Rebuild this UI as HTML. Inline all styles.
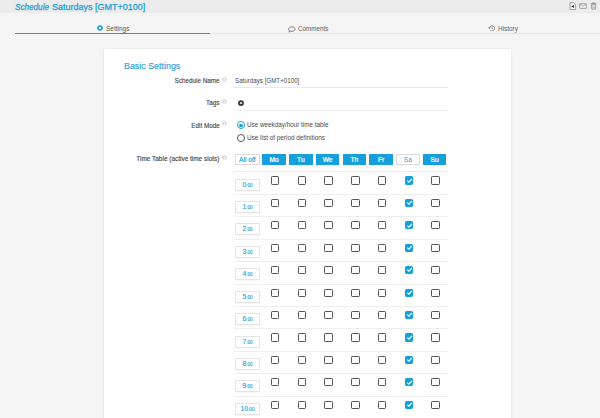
<!DOCTYPE html><html><head><meta charset="utf-8"><style>
*{margin:0;padding:0;box-sizing:border-box}
html,body{width:600px;height:418px;overflow:hidden;background:#f5f5f5;font-family:"Liberation Sans",sans-serif}
.a{position:absolute;white-space:nowrap}
.t{position:absolute;white-space:nowrap;transform-origin:0 0}
.tr{transform-origin:100% 0}
.line{height:1px;background:#e8e8e8}
.btn{height:11px;background:#179fdb;color:#fff;font-size:6.6px;font-weight:bold;text-align:center}
.wbtn{background:#fff;border:0.8px solid #dcdcdc;color:#179fdb;font-weight:normal}
.cb{width:8.3px;height:8.2px;border:1.25px solid #575757;border-radius:1.2px}
.cbc{background:#179fdb;border-color:#179fdb}
.tbtn{height:12px;width:24.6px;background:#fff;border:0.8px solid #e4e4e4;border-radius:1px;box-shadow:0 0.4px 0.6px rgba(0,0,0,0.06);color:#179fdb;text-align:center;line-height:9.8px;font-size:6.8px;-webkit-text-stroke:0.12px #179fdb}
.tbtn small{font-size:4.6px}
.radio{width:8px;height:8px;border:1px solid #555;border-radius:50%}
</style></head><body><div class="a" style="left:0;top:0;width:600px;height:13.4px;background:#ececec"></div><div class="t" style="left:15.00px;top:3.30px;font-size:9.0px;line-height:9.0px;color:#179fdb;transform:scaleX(0.9060);font-style:italic;-webkit-text-stroke:0.25px #179fdb">Schedule</div><div class="t" style="left:52.00px;top:3.30px;font-size:9.0px;line-height:9.0px;color:#179fdb;transform:scaleX(1.0000);-webkit-text-stroke:0.25px #179fdb">Saturdays [GMT+0100]</div><svg class="a" style="left:569px;top:2px" width="29" height="9" viewBox="0 0 29 9">
<path d="M1.1 0.7h3.7l1.8 1.8v5h-5.5z" fill="#f6f6f6" stroke="#8a8a8a" stroke-width="0.8"/>
<path d="M5 2.7l-2.6 1.7 2.6 1.7z" fill="#3a3a3a"/>
<rect x="10.7" y="1.7" width="6.6" height="4.7" rx="0.5" fill="#f6f6f6" stroke="#8a8a8a" stroke-width="0.8"/>
<path d="M10.9 2.1l3.1 2.3 3.1-2.3" fill="none" stroke="#8a8a8a" stroke-width="0.8"/>
<path d="M21.8 1.6h5.4M23.5 1.6v-0.8h2v0.8M22.4 2.4h4.4l-0.4 4.7h-3.6z" fill="none" stroke="#8f8f8f" stroke-width="0.8"/>
<path d="M22.9 4h3.4M23 5.5h3.2" stroke="#aaa" stroke-width="0.6"/>
</svg><div class="a" style="left:15px;top:33px;width:585px;height:1px;background:#e6e6e6"></div><div class="a" style="left:15px;top:32.6px;width:195px;height:1.4px;background:#179fdb"></div><svg class="a" style="left:97.3px;top:25.2px" width="6" height="6" viewBox="0 0 6 6"><circle cx="3" cy="3" r="2.0" fill="none" stroke="#179fdb" stroke-width="1.6"/><path d="M3 0.4v1M3 4.6v1M0.4 3h1M4.6 3h1M1.2 1.2l0.7 0.7M4.1 4.1l0.7 0.7M1.2 4.8l0.7-0.7M4.1 1.9l0.7-0.7" stroke="#179fdb" stroke-width="0.8"/></svg><div class="t" style="left:105.50px;top:25.70px;font-size:6.4px;line-height:6.4px;color:#5a5a5a;transform:scaleX(1.0162);">Settings</div><svg class="a" style="left:287.6px;top:25.6px" width="8" height="7" viewBox="0 0 8 7"><path d="M4 0.9c1.8 0 3.1 1 3.1 2.2s-1.3 2.2-3.1 2.2c-0.5 0-0.9-0.1-1.3-0.2l-1.7 1.1 0.5-1.5c-0.6-0.4-0.9-1-0.9-1.6 0-1.2 1.4-2.2 3.4-2.2z" fill="none" stroke="#6a6a6a" stroke-width="0.85"/></svg><div class="t" style="left:298.00px;top:25.60px;font-size:6.4px;line-height:6.4px;color:#5a5a5a;transform:scaleX(0.9793);">Comments</div><svg class="a" style="left:487.9px;top:24.7px" width="7" height="6.5" viewBox="0 0 7 6.5"><path d="M1.4 3.2a2.6 2.6 0 1 1 1 2.2" fill="none" stroke="#666" stroke-width="0.8"/><path d="M0.2 2.6l1.2 1.3 1.2-1.3z" fill="#666"/><path d="M4 1.8v1.6h1.1" fill="none" stroke="#666" stroke-width="0.6"/></svg><div class="t" style="left:497.90px;top:25.50px;font-size:6.4px;line-height:6.4px;color:#5a5a5a;transform:scaleX(1.0044);">History</div><div class="a" style="left:103.8px;top:49.4px;width:407px;height:400px;background:#fff;box-shadow:0 0 2px rgba(0,0,0,0.12)"></div><div class="t" style="left:124.00px;top:60.80px;font-size:9.6px;line-height:9.6px;color:#2a9fd8;transform:scaleX(0.9255);-webkit-text-stroke:0.15px #2a9fd8">Basic Settings</div><div class="t tr" style="right:380.20px;top:77.60px;font-size:6.4px;line-height:6.4px;color:#444;transform:scaleX(0.9838);-webkit-text-stroke:0.12px #444">Schedule Name</div><svg class="a" style="left:222.00px;top:76.65px" width="5" height="5" viewBox="0 0 5 5"><circle cx="2.5" cy="2.5" r="2.35" fill="#dadada"/><rect x="2.1" y="2.0" width="0.8" height="1.9" fill="#fff"/><rect x="2.1" y="1.0" width="0.8" height="0.7" fill="#fff"/></svg><div class="t" style="left:235.30px;top:77.90px;font-size:6.5px;line-height:6.5px;color:#4a4a4a;transform:scaleX(0.9543);">Saturdays [GMT+0100]</div><div class="a line" style="left:233.5px;top:86.7px;width:214.3px"></div><div class="t tr" style="right:380.20px;top:99.80px;font-size:6.4px;line-height:6.4px;color:#444;transform:scaleX(0.9912);-webkit-text-stroke:0.12px #444">Tags</div><svg class="a" style="left:222.00px;top:98.55px" width="5" height="5" viewBox="0 0 5 5"><circle cx="2.5" cy="2.5" r="2.35" fill="#dadada"/><rect x="2.1" y="2.0" width="0.8" height="1.9" fill="#fff"/><rect x="2.1" y="1.0" width="0.8" height="0.7" fill="#fff"/></svg><svg class="a" style="left:237.8px;top:99.9px" width="6" height="6" viewBox="0 0 6 6"><circle cx="3" cy="3" r="2.1" fill="#fff" stroke="#222" stroke-width="1.5"/><path d="M3 2.2v1.6M2.2 3h1.6" stroke="#777" stroke-width="0.5"/></svg><div class="a line" style="left:233.5px;top:109.9px;width:214.3px;background:#eeeeee"></div><div class="t tr" style="right:380.20px;top:122.60px;font-size:6.4px;line-height:6.4px;color:#444;transform:scaleX(0.9925);-webkit-text-stroke:0.12px #444">Edit Mode</div><svg class="a" style="left:222.00px;top:121.05px" width="5" height="5" viewBox="0 0 5 5"><circle cx="2.5" cy="2.5" r="2.35" fill="#dadada"/><rect x="2.1" y="2.0" width="0.8" height="1.9" fill="#fff"/><rect x="2.1" y="1.0" width="0.8" height="0.7" fill="#fff"/></svg><div class="a radio" style="left:237.2px;top:121.3px;border-color:#179fdb"></div><div class="a" style="left:239.4px;top:123.5px;width:3.6px;height:3.6px;border-radius:50%;background:#179fdb"></div><div class="t" style="left:247.20px;top:121.90px;font-size:6.4px;line-height:6.4px;color:#4a4a4a;transform:scaleX(0.9887);">Use weekday/hour time table</div><div class="a radio" style="left:237.2px;top:133.8px"></div><div class="t" style="left:247.20px;top:134.60px;font-size:6.4px;line-height:6.4px;color:#4a4a4a;transform:scaleX(0.9979);">Use list of period definitions</div><div class="t tr" style="right:380.50px;top:156.40px;font-size:6.4px;line-height:6.4px;color:#444;transform:scaleX(1.0083);-webkit-text-stroke:0.12px #444">Time Table (active time slots)</div><svg class="a" style="left:222.00px;top:154.95px" width="5" height="5" viewBox="0 0 5 5"><circle cx="2.5" cy="2.5" r="2.35" fill="#dadada"/><rect x="2.1" y="2.0" width="0.8" height="1.9" fill="#fff"/><rect x="2.1" y="1.0" width="0.8" height="0.7" fill="#fff"/></svg><div class="a btn wbtn" style="left:235.3px;top:154.2px;width:24.4px;height:11px;"></div><div class="t" style="left:239.20px;top:157.10px;font-size:6.8px;line-height:6.8px;color:#179fdb;transform:scaleX(0.9832);-webkit-text-stroke:0.15px #179fdb">All off</div><div class="a btn" style="left:262.30px;top:154.2px;width:23.6px;height:10.8px"></div><div class="t" style="left:269.52px;top:156.90px;font-size:6.6px;line-height:6.6px;color:#fff;transform:scaleX(1.0000);-webkit-text-stroke:0.22px #fff">Mo</div><div class="a btn" style="left:289.05px;top:154.2px;width:23.6px;height:10.8px"></div><div class="t" style="left:297.12px;top:156.90px;font-size:6.6px;line-height:6.6px;color:#fff;transform:scaleX(1.0000);-webkit-text-stroke:0.22px #fff">Tu</div><div class="a btn" style="left:315.80px;top:154.2px;width:23.6px;height:10.8px"></div><div class="t" style="left:322.71px;top:156.90px;font-size:6.6px;line-height:6.6px;color:#fff;transform:scaleX(1.0000);-webkit-text-stroke:0.22px #fff">We</div><div class="a btn" style="left:342.55px;top:154.2px;width:23.6px;height:10.8px"></div><div class="t" style="left:350.50px;top:156.90px;font-size:6.6px;line-height:6.6px;color:#fff;transform:scaleX(1.0000);-webkit-text-stroke:0.22px #fff">Th</div><div class="a btn" style="left:369.30px;top:154.2px;width:23.6px;height:10.8px"></div><div class="t" style="left:377.99px;top:156.90px;font-size:6.6px;line-height:6.6px;color:#fff;transform:scaleX(1.0000);-webkit-text-stroke:0.22px #fff">Fr</div><div class="a btn wbtn" style="left:396.05px;top:154.2px;width:23.6px;height:10.8px"></div><div class="t" style="left:403.81px;top:156.90px;font-size:6.6px;line-height:6.6px;color:#179fdb;transform:scaleX(1.0000);">Sa</div><div class="a btn" style="left:422.80px;top:154.2px;width:23.6px;height:10.8px"></div><div class="t" style="left:430.56px;top:156.90px;font-size:6.6px;line-height:6.6px;color:#fff;transform:scaleX(1.0000);-webkit-text-stroke:0.22px #fff">Su</div><div class="a line" style="left:234.2px;top:171.4px;width:213.6px;background:#ececec"></div><div class="a tbtn" style="left:235.2px;top:178.60px">0<small>:00</small></div><div class="a cb" style="left:271.05px;top:176.40px"></div><div class="a cb" style="left:297.77px;top:176.40px"></div><div class="a cb" style="left:324.49px;top:176.40px"></div><div class="a cb" style="left:351.21px;top:176.40px"></div><div class="a cb" style="left:377.93px;top:176.40px"></div><div class="a cb cbc" style="left:404.85px;top:176.40px"></div><svg class="a" style="left:404.75px;top:175.70px" width="9" height="9" viewBox="0 0 9 9"><path d="M2.3 4.6l1.6 1.6 3-3.2" fill="none" stroke="#fff" stroke-width="1.1"/></svg><div class="a cb" style="left:431.37px;top:176.40px"></div><div class="a line" style="left:234.2px;top:193.83px;width:213.6px;background:#efefef"></div><div class="a tbtn" style="left:235.2px;top:201.03px">1<small>:00</small></div><div class="a cb" style="left:271.05px;top:198.83px"></div><div class="a cb" style="left:297.77px;top:198.83px"></div><div class="a cb" style="left:324.49px;top:198.83px"></div><div class="a cb" style="left:351.21px;top:198.83px"></div><div class="a cb" style="left:377.93px;top:198.83px"></div><div class="a cb cbc" style="left:404.85px;top:198.83px"></div><svg class="a" style="left:404.75px;top:198.13px" width="9" height="9" viewBox="0 0 9 9"><path d="M2.3 4.6l1.6 1.6 3-3.2" fill="none" stroke="#fff" stroke-width="1.1"/></svg><div class="a cb" style="left:431.37px;top:198.83px"></div><div class="a line" style="left:234.2px;top:216.26px;width:213.6px;background:#efefef"></div><div class="a tbtn" style="left:235.2px;top:223.46px">2<small>:00</small></div><div class="a cb" style="left:271.05px;top:221.26px"></div><div class="a cb" style="left:297.77px;top:221.26px"></div><div class="a cb" style="left:324.49px;top:221.26px"></div><div class="a cb" style="left:351.21px;top:221.26px"></div><div class="a cb" style="left:377.93px;top:221.26px"></div><div class="a cb cbc" style="left:404.85px;top:221.26px"></div><svg class="a" style="left:404.75px;top:220.56px" width="9" height="9" viewBox="0 0 9 9"><path d="M2.3 4.6l1.6 1.6 3-3.2" fill="none" stroke="#fff" stroke-width="1.1"/></svg><div class="a cb" style="left:431.37px;top:221.26px"></div><div class="a line" style="left:234.2px;top:238.69px;width:213.6px;background:#efefef"></div><div class="a tbtn" style="left:235.2px;top:245.89px">3<small>:00</small></div><div class="a cb" style="left:271.05px;top:243.69px"></div><div class="a cb" style="left:297.77px;top:243.69px"></div><div class="a cb" style="left:324.49px;top:243.69px"></div><div class="a cb" style="left:351.21px;top:243.69px"></div><div class="a cb" style="left:377.93px;top:243.69px"></div><div class="a cb cbc" style="left:404.85px;top:243.69px"></div><svg class="a" style="left:404.75px;top:242.99px" width="9" height="9" viewBox="0 0 9 9"><path d="M2.3 4.6l1.6 1.6 3-3.2" fill="none" stroke="#fff" stroke-width="1.1"/></svg><div class="a cb" style="left:431.37px;top:243.69px"></div><div class="a line" style="left:234.2px;top:261.12px;width:213.6px;background:#efefef"></div><div class="a tbtn" style="left:235.2px;top:268.32px">4<small>:00</small></div><div class="a cb" style="left:271.05px;top:266.12px"></div><div class="a cb" style="left:297.77px;top:266.12px"></div><div class="a cb" style="left:324.49px;top:266.12px"></div><div class="a cb" style="left:351.21px;top:266.12px"></div><div class="a cb" style="left:377.93px;top:266.12px"></div><div class="a cb cbc" style="left:404.85px;top:266.12px"></div><svg class="a" style="left:404.75px;top:265.42px" width="9" height="9" viewBox="0 0 9 9"><path d="M2.3 4.6l1.6 1.6 3-3.2" fill="none" stroke="#fff" stroke-width="1.1"/></svg><div class="a cb" style="left:431.37px;top:266.12px"></div><div class="a line" style="left:234.2px;top:283.55px;width:213.6px;background:#efefef"></div><div class="a tbtn" style="left:235.2px;top:290.75px">5<small>:00</small></div><div class="a cb" style="left:271.05px;top:288.55px"></div><div class="a cb" style="left:297.77px;top:288.55px"></div><div class="a cb" style="left:324.49px;top:288.55px"></div><div class="a cb" style="left:351.21px;top:288.55px"></div><div class="a cb" style="left:377.93px;top:288.55px"></div><div class="a cb cbc" style="left:404.85px;top:288.55px"></div><svg class="a" style="left:404.75px;top:287.85px" width="9" height="9" viewBox="0 0 9 9"><path d="M2.3 4.6l1.6 1.6 3-3.2" fill="none" stroke="#fff" stroke-width="1.1"/></svg><div class="a cb" style="left:431.37px;top:288.55px"></div><div class="a line" style="left:234.2px;top:305.98px;width:213.6px;background:#efefef"></div><div class="a tbtn" style="left:235.2px;top:313.18px">6<small>:00</small></div><div class="a cb" style="left:271.05px;top:310.98px"></div><div class="a cb" style="left:297.77px;top:310.98px"></div><div class="a cb" style="left:324.49px;top:310.98px"></div><div class="a cb" style="left:351.21px;top:310.98px"></div><div class="a cb" style="left:377.93px;top:310.98px"></div><div class="a cb cbc" style="left:404.85px;top:310.98px"></div><svg class="a" style="left:404.75px;top:310.28px" width="9" height="9" viewBox="0 0 9 9"><path d="M2.3 4.6l1.6 1.6 3-3.2" fill="none" stroke="#fff" stroke-width="1.1"/></svg><div class="a cb" style="left:431.37px;top:310.98px"></div><div class="a line" style="left:234.2px;top:328.41px;width:213.6px;background:#efefef"></div><div class="a tbtn" style="left:235.2px;top:335.61px">7<small>:00</small></div><div class="a cb" style="left:271.05px;top:333.41px"></div><div class="a cb" style="left:297.77px;top:333.41px"></div><div class="a cb" style="left:324.49px;top:333.41px"></div><div class="a cb" style="left:351.21px;top:333.41px"></div><div class="a cb" style="left:377.93px;top:333.41px"></div><div class="a cb cbc" style="left:404.85px;top:333.41px"></div><svg class="a" style="left:404.75px;top:332.71px" width="9" height="9" viewBox="0 0 9 9"><path d="M2.3 4.6l1.6 1.6 3-3.2" fill="none" stroke="#fff" stroke-width="1.1"/></svg><div class="a cb" style="left:431.37px;top:333.41px"></div><div class="a line" style="left:234.2px;top:350.84px;width:213.6px;background:#efefef"></div><div class="a tbtn" style="left:235.2px;top:358.04px">8<small>:00</small></div><div class="a cb" style="left:271.05px;top:355.84px"></div><div class="a cb" style="left:297.77px;top:355.84px"></div><div class="a cb" style="left:324.49px;top:355.84px"></div><div class="a cb" style="left:351.21px;top:355.84px"></div><div class="a cb" style="left:377.93px;top:355.84px"></div><div class="a cb cbc" style="left:404.85px;top:355.84px"></div><svg class="a" style="left:404.75px;top:355.14px" width="9" height="9" viewBox="0 0 9 9"><path d="M2.3 4.6l1.6 1.6 3-3.2" fill="none" stroke="#fff" stroke-width="1.1"/></svg><div class="a cb" style="left:431.37px;top:355.84px"></div><div class="a line" style="left:234.2px;top:373.27px;width:213.6px;background:#efefef"></div><div class="a tbtn" style="left:235.2px;top:380.47px">9<small>:00</small></div><div class="a cb" style="left:271.05px;top:378.27px"></div><div class="a cb" style="left:297.77px;top:378.27px"></div><div class="a cb" style="left:324.49px;top:378.27px"></div><div class="a cb" style="left:351.21px;top:378.27px"></div><div class="a cb" style="left:377.93px;top:378.27px"></div><div class="a cb cbc" style="left:404.85px;top:378.27px"></div><svg class="a" style="left:404.75px;top:377.57px" width="9" height="9" viewBox="0 0 9 9"><path d="M2.3 4.6l1.6 1.6 3-3.2" fill="none" stroke="#fff" stroke-width="1.1"/></svg><div class="a cb" style="left:431.37px;top:378.27px"></div><div class="a line" style="left:234.2px;top:395.70px;width:213.6px;background:#efefef"></div><div class="a tbtn" style="left:235.2px;top:402.90px">10<small>:00</small></div><div class="a cb" style="left:271.05px;top:400.70px"></div><div class="a cb" style="left:297.77px;top:400.70px"></div><div class="a cb" style="left:324.49px;top:400.70px"></div><div class="a cb" style="left:351.21px;top:400.70px"></div><div class="a cb" style="left:377.93px;top:400.70px"></div><div class="a cb cbc" style="left:404.85px;top:400.70px"></div><svg class="a" style="left:404.75px;top:400.00px" width="9" height="9" viewBox="0 0 9 9"><path d="M2.3 4.6l1.6 1.6 3-3.2" fill="none" stroke="#fff" stroke-width="1.1"/></svg><div class="a cb" style="left:431.37px;top:400.70px"></div><div class="a line" style="left:234.2px;top:418.13px;width:213.6px;background:#efefef"></div></body></html>
